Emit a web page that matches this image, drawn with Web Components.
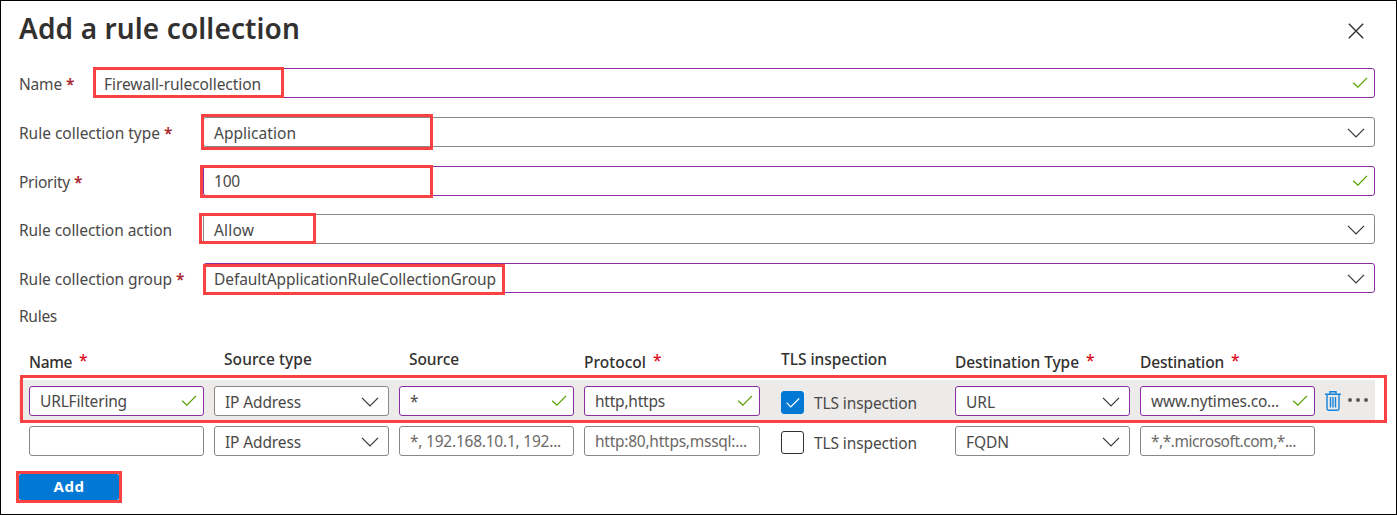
<!DOCTYPE html>
<html lang="en">
<head>
<meta charset="utf-8">
<title>Add a rule collection</title>
<style>
html,body{margin:0;padding:0;background:#fff}
body{font-family:"Noto Sans","Open Sans",sans-serif;font-size:15.5px;color:#4a4948;overflow:hidden}
</style>
</head>
<body>
<rule-panel></rule-panel>
<script>
function define(name, html, after) {
  const t = document.createElement('template');
  t.innerHTML = html;
  customElements.define(name, class extends HTMLElement {
    constructor() {
      super();
      this.attachShadow({mode: 'open'}).appendChild(t.content.cloneNode(true));
    }
    connectedCallback() { if (after) after(this, this.shadowRoot); }
  });
}

/* Text run tracked to a given width (w) */
define('fit-text', `<style>:host{display:inline-block;white-space:pre;line-height:20px;flex:none}span{display:inline-block}</style><span><slot></slot></span>`, (el, r) => {
  const w = parseFloat(el.getAttribute('w'));
  const n = el.textContent.length;
  if (!w || !n) return;
  const s = r.querySelector('span');
  s.style.letterSpacing = ((w - s.getBoundingClientRect().width) / n) + 'px';
});

define('ui-icon', `<style>:host{display:block;flex:none;line-height:0}svg{display:block;overflow:visible}</style><div></div>`, (el, r) => {
  const icons = {
    check: '<svg width="16" height="12" viewBox="0 0 16 12" fill="none" stroke="#57a300" stroke-width="1.3"><path d="M1.2 5.7 5.9 10.2 15 .9"/></svg>',
    chevron: '<svg width="18" height="10" viewBox="0 0 18 10" fill="none" stroke="#3b3a39" stroke-width="1.3"><path d="M1 .9 9 8.9l8-8"/></svg>',
    close: '<svg width="16" height="16" viewBox="0 0 16 16" fill="none" stroke="#323130" stroke-width="1.4"><path d="M.8.8l14.4 14.4M15.2.8.8 15.2"/></svg>',
    tick: '<svg width="14" height="10" viewBox="0 0 14 10" fill="none" stroke="#fff" stroke-width="1.2"><path d="M.6 4.7 4.7 8.9 13.2.5"/></svg>',
    trash: '<svg width="16" height="20" viewBox="0 0 16 20" fill="none" stroke="#1583da" stroke-width="1.4"><path d="M0 3.2h16M5 2.8V.8h6v2M2 3.4v14.4q0 1.4 1.4 1.4h9.2q1.4 0 1.4-1.4V3.4M5.5 6v10.4M8 6v10.4M10.5 6v10.4"/></svg>',
    dots: '<svg width="20" height="4" viewBox="0 0 20 4" fill="#5c5a58"><circle cx="2" cy="2" r="2"/><circle cx="10" cy="2" r="2"/><circle cx="18" cy="2" r="2"/></svg>'
  };
  r.querySelector('div').innerHTML = icons[el.getAttribute('name')];
});

/* Bordered field; icon="check|chevron", state "valid" for the purple outline */
define('ui-field', `<style>
:host{display:flex;box-sizing:border-box;height:30px;border:1px solid #8a8886;border-radius:3px;background:#fff;align-items:center;padding-left:10px;padding-right:var(--pr,6px);justify-content:space-between}
:host([valid]){border-color:#8a2da5}
:host([hint]){color:#6b6967}
:host([icon=chevron]){--pr:9px}
.t{height:20px;display:flex;position:relative;top:var(--ty,0px)}
</style><div class="t"><slot></slot></div><ui-icon hidden></ui-icon>`, (el, r) => {
  const i = el.getAttribute('icon'), ic = r.querySelector('ui-icon');
  if (!i) { ic.remove(); return; }
  const n = document.createElement('ui-icon');
  n.setAttribute('name', i);
  if (i === 'chevron') n.style.marginTop = '2px';
  ic.replaceWith(n);
});

define('form-row', `<style>
:host{display:flex;height:30px}
.l{width:var(--lw,184px);flex:none;display:flex;padding-top:6px;box-sizing:border-box}
::slotted(ui-field){flex:1}
b{color:#a4262c;font-weight:600;line-height:20px;margin-left:4px}
</style><div class="l"><slot name="label"></slot><b>*</b></div><slot></slot>`, (el, r) => {
  if (!el.hasAttribute('required')) r.querySelector('b').remove();
});

define('col-head', `<style>
:host{display:flex;font-weight:500;color:#323130;padding-top:0;align-items:flex-start}
:host([required]){padding-top:3px}
i{font-style:normal;color:#e00b1c;font-weight:500;line-height:20px;margin:-2px 0 0 7px}
</style><slot></slot><i>*</i>`, (el, r) => {
  if (!el.hasAttribute('required')) r.querySelector('i').remove();
});

define('ui-check', `<style>
:host{display:flex;align-items:center;gap:10px;padding:5px 0 0 11px}
div{width:23px;height:23px;box-sizing:border-box;border:1px solid #323130;border-radius:3px;background:#fff;display:flex;align-items:center;justify-content:center;flex:none}
:host([checked]) div{background:#0078d4;border-color:#0078d4}
:host(:not([checked])) ui-icon{display:none}
</style><div><ui-icon name="tick"></ui-icon></div><slot></slot>`);

define('rule-row', `<style>
:host{display:grid;box-sizing:border-box;height:40px;padding:6px 0 4px 10px;grid-template-columns:175px 175px 175px 176px 175px 175px 175px 50px;column-gap:10px;align-items:start;width:1356px}
:host([head]){height:31px;padding:0 0 0 10px}
:host([selected]){background:#edebe9}
</style><slot></slot>`);

define('row-actions', `<style>:host{display:flex;align-items:center;padding-top:5px;gap:7px}ui-icon+ui-icon{margin-top:-2px}</style><ui-icon name="trash"></ui-icon><ui-icon name="dots"></ui-icon>`);

define('ui-button', `<style>:host{display:flex;box-sizing:border-box;width:100px;height:26px;padding-bottom:2px;background:#0078d4;color:#fff;font-weight:700;font-size:15px;border-radius:2px;justify-content:center;align-items:center}</style><slot></slot>`);

/* Red highlight frame laid over the form */
define('mark-box', `<style>:host{position:absolute;box-sizing:border-box;border:3px solid #fb4242;pointer-events:none}</style>`, el => {
  const [x, y, w, h] = el.getAttribute('box').split(' ');
  Object.assign(el.style, {left: x + 'px', top: y + 'px', width: w + 'px', height: h + 'px'});
});

define('rule-panel', `<style>
:host{display:block;position:relative;box-sizing:border-box;width:1397px;height:515px;border:1px solid #000;background:#fff;padding:0 21px 0 18px}
header{display:flex;justify-content:space-between;height:67px;box-sizing:border-box}
h1{margin:8px 0 0;font-size:28px;font-weight:600;color:#323130;line-height:38px}
h1 fit-text{line-height:38px}
header ui-icon{margin:22px 11.5px 0 0}
.form{display:flex;flex-direction:column;gap:19px}
.rules{margin-top:13px;height:20px;line-height:20px}
.table{margin-top:23px}
.foot{margin-top:14px}
.marks{position:absolute;left:-1px;top:-1px}
</style>
<header><h1><fit-text w="281">Add a rule collection</fit-text></h1><ui-icon name="close"></ui-icon></header>
<div class="form">
<form-row required style="--lw:75px"><fit-text slot="label" w="43">Name</fit-text><ui-field valid icon="check" style="--ty:1px;padding-left:9px"><fit-text w="157">Firewall-rulecollection</fit-text></ui-field></form-row>
<form-row required><fit-text slot="label" w="141">Rule collection type</fit-text><ui-field icon="chevron" style="--ty:1px"><fit-text w="82">Application</fit-text></ui-field></form-row>
<form-row required><fit-text slot="label" w="51">Priority</fit-text><ui-field valid icon="check"><fit-text w="26">100</fit-text></ui-field></form-row>
<form-row style="margin-top:-1px"><fit-text slot="label" w="153">Rule collection action</fit-text><ui-field icon="chevron" style="--ty:1px"><fit-text w="40">Allow</fit-text></ui-field></form-row>
<form-row required><fit-text slot="label" w="153">Rule collection group</fit-text><ui-field valid icon="chevron" style="--ty:1px"><fit-text w="282">DefaultApplicationRuleCollectionGroup</fit-text></ui-field></form-row>
</div>
<div class="rules"><fit-text w="38">Rules</fit-text></div>
<div class="table">
<rule-row head>
<col-head required><fit-text w="43">Name</fit-text></col-head>
<col-head style="padding-left:10px"><fit-text w="88">Source type</fit-text></col-head>
<col-head style="padding-left:10px"><fit-text w="50">Source</fit-text></col-head>
<col-head required><fit-text w="62">Protocol</fit-text></col-head>
<col-head style="padding-left:11px"><fit-text w="106">TLS inspection</fit-text></col-head>
<col-head required><fit-text w="124">Destination Type</fit-text></col-head>
<col-head required><fit-text w="84">Destination</fit-text></col-head>
</rule-row>
<rule-row selected>
<ui-field valid icon="check"><fit-text w="87">URLFiltering</fit-text></ui-field>
<ui-field icon="chevron" style="--ty:1px"><fit-text w="76">IP Address</fit-text></ui-field>
<ui-field valid icon="check"><fit-text w="7">*</fit-text></ui-field>
<ui-field valid icon="check"><fit-text w="70">http,https</fit-text></ui-field>
<ui-check checked><fit-text w="103">TLS inspection</fit-text></ui-check>
<ui-field valid icon="chevron" style="--ty:1px"><fit-text w="29">URL</fit-text></ui-field>
<ui-field valid icon="check"><fit-text w="128">www.nytimes.co...</fit-text></ui-field>
<row-actions></row-actions>
</rule-row>
<rule-row>
<ui-field></ui-field>
<ui-field icon="chevron" style="--ty:1px"><fit-text w="76">IP Address</fit-text></ui-field>
<ui-field hint><fit-text w="151">*, 192.168.10.1, 192...</fit-text></ui-field>
<ui-field hint><fit-text w="152">http:80,https,mssql:...</fit-text></ui-field>
<ui-check><fit-text w="103">TLS inspection</fit-text></ui-check>
<ui-field icon="chevron" style="--ty:1px"><fit-text w="43">FQDN</fit-text></ui-field>
<ui-field hint><fit-text w="145">*,*.microsoft.com,*...</fit-text></ui-field>
</rule-row>
</div>
<div class="foot"><ui-button><fit-text w="31">Add</fit-text></ui-button></div>
<div class="marks">
<mark-box box="93 67 191 31"></mark-box>
<mark-box box="201 114 232 36"></mark-box>
<mark-box box="200 165 233 33"></mark-box>
<mark-box box="199 213 117 31"></mark-box>
<mark-box box="203 264 302 31"></mark-box>
<mark-box box="20 375 1367 48"></mark-box>
<mark-box box="16 471 106 32"></mark-box>
</div>`);
</script>
</body>
</html>
